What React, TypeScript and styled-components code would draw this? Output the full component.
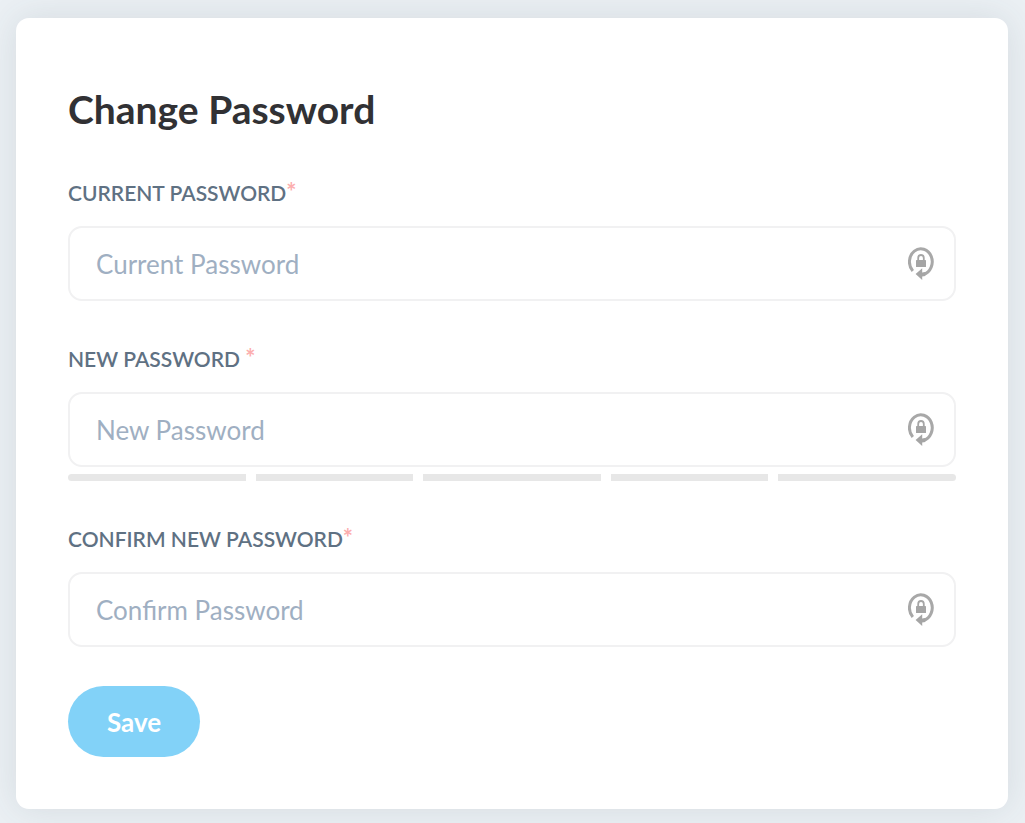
import React from "react";
import styled, { createGlobalStyle } from "styled-components";

const GlobalStyle = createGlobalStyle`
  *, *::before, *::after { box-sizing: border-box; }
  body {
    margin: 0;
    background: #ebf0f4;
    font-family: Lato, "Liberation Sans", sans-serif;
  }
`;

const Page = styled.main`
  padding: 18px 17px 14px 16px;
`;

const Card = styled.form`
  display: flex;
  flex-direction: column;
  padding: 67px 52px 52px;
  background: #fff;
  border-radius: 13px;
  box-shadow: 0 0 36px rgba(60, 70, 80, 0.12);
`;

const Title = styled.h1`
  margin: 0 0 48px;
  color: #313134;
  font-size: 39px;
  font-weight: 700;
  line-height: 48px;
`;

const Fields = styled.div`
  display: flex;
  flex-direction: column;
  gap: 46px;
  margin-bottom: 39px;
`;

const Label = styled.label`
  display: block;
  margin-bottom: 21px;
  color: #5f7183;
  font-size: 21px;
  font-weight: 600;
  line-height: 24px;
  text-transform: uppercase;
`;

const Required = styled.span`
  color: #fcaeae;
  font-size: 24px;
  font-weight: 700;
  line-height: 0;
`;

const InputBox = styled.div`
  display: flex;
  align-items: center;
  height: 75px;
  padding: 0 20px 0 26px;
  border: 2px solid #f1f1f2;
  border-radius: 14px;
`;

const Input = styled.input`
  flex: 1;
  min-width: 0;
  padding: 0;
  border: 0;
  outline: 0;
  background: transparent;
  color: #313134;
  font-family: inherit;
  font-size: 26px;
  line-height: 32px;

  &::placeholder {
    color: #9fafc2;
    opacity: 1;
  }
`;

const LockIcon = styled.svg`
  flex: none;
  width: 26px;
  height: 34px;
`;

const Strength = styled.div`
  display: grid;
  grid-template-columns: 178fr 157fr 178fr 157fr 178fr;
  gap: 10px;
  height: 7px;
  margin-top: 7px;
  border-radius: 4px;
  overflow: hidden;
`;

const Segment = styled.span`
  background: #e7e7e7;
`;

const SaveButton = styled.button`
  align-self: flex-start;
  height: 71px;
  padding: 0 39px;
  border: 0;
  border-radius: 36px;
  background: #82d2f8;
  color: #fff;
  font-family: inherit;
  font-size: 26px;
  font-weight: 700;
  line-height: 32px;
  cursor: pointer;
`;

type FieldProps = {
  id: string;
  label: string;
  placeholder: string;
  spaced?: boolean;
  strength?: boolean;
};

function PasswordField({ id, label, placeholder, spaced, strength }: FieldProps) {
  return (
    <div>
      <Label htmlFor={id}>
        {label}
        {spaced && " "}
        <Required>*</Required>
      </Label>
      <InputBox>
        <Input id={id} type="password" placeholder={placeholder} />
        <LockIcon viewBox="0 0 26 34" aria-hidden="true">
          <path
            d="M4.8 24A11.4 13 0 1 1 15.6 27.4"
            fill="none"
            stroke="#a8a8a8"
            strokeWidth="3"
          />
          <path d="M7.6 27 14.2 21.2V25.5L17.4 25V29L14.2 29.6V33Z" fill="#a5a5a5" />
          <rect x="8" y="13" width="10" height="7" rx="0.6" fill="#a5a5a5" />
          <path
            d="M10.2 13.4V11a2.8 3 0 0 1 5.6 0V13.4"
            fill="none"
            stroke="#a5a5a5"
            strokeWidth="1.8"
          />
        </LockIcon>
      </InputBox>
      {strength && (
        <Strength>
          <Segment />
          <Segment />
          <Segment />
          <Segment />
          <Segment />
        </Strength>
      )}
    </div>
  );
}

export default function App() {
  return (
    <>
      <GlobalStyle />
      <Page>
        <Card onSubmit={(event) => event.preventDefault()}>
          <Title>Change Password</Title>
          <Fields>
            <PasswordField id="current" label="Current Password" placeholder="Current Password" />
            <PasswordField id="new" label="New Password" placeholder="New Password" spaced strength />
            <PasswordField
              id="confirm"
              label="Confirm New Password"
              placeholder="Confirm Password"
            />
          </Fields>
          <SaveButton type="submit">Save</SaveButton>
        </Card>
      </Page>
    </>
  );
}
